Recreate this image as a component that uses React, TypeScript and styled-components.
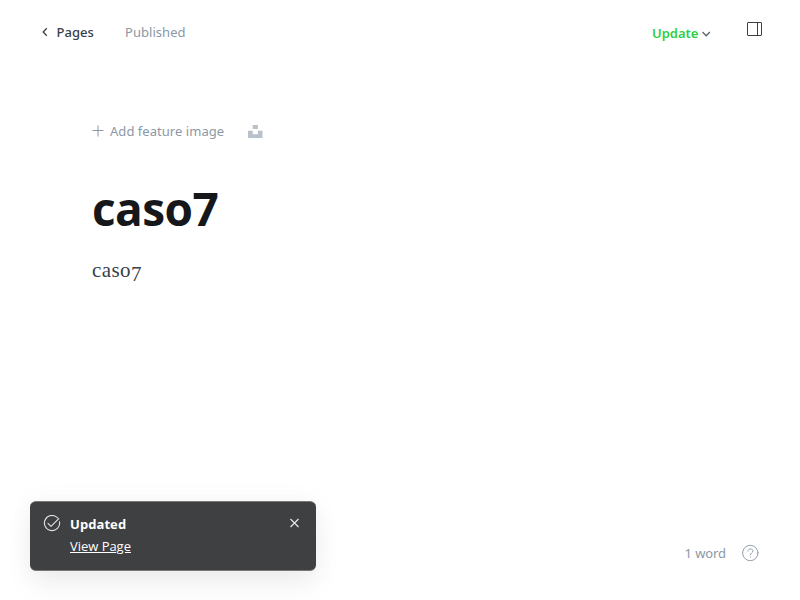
import React from "react";
import styled, { createGlobalStyle } from "styled-components";

const GlobalStyle = createGlobalStyle`
  * { box-sizing: border-box; }
  body { margin: 0; background: #fff; font-family: "Noto Sans", "Open Sans", sans-serif; }
`;

const Screen = styled.div`
  position: relative;
  width: 800px;
  height: 600px;
  overflow: hidden;
  display: flex;
  flex-direction: column;
  background: #fff;
`;

const Header = styled.header`
  height: 64px;
  padding: 0 37px 0 41px;
  display: flex;
  align-items: center;
  flex-shrink: 0;
`;

const BackLink = styled.a`
  display: flex;
  align-items: center;
  gap: 8.5px;
  width: 84px;
  color: #394047;
`;

const Label = styled.span<{ $color: string; $weight?: number; $spacing?: number }>`
  font-size: 13px;
  line-height: 20px;
  white-space: nowrap;
  color: ${(p) => p.$color};
  font-weight: ${(p) => p.$weight ?? 400};
  letter-spacing: ${(p) => p.$spacing ?? 0.04}px;
`;

const HeaderActions = styled.div`
  display: flex;
  align-items: center;
  margin-left: auto;
`;

const UpdateButton = styled.button`
  display: flex;
  align-items: center;
  gap: 3px;
  width: 94px;
  padding: 2px 0 0;
  border: 0;
  background: none;
  font-family: inherit;
  color: #30cf43;
`;

const PanelButton = styled.button`
  display: flex;
  padding: 0 0 7px;
  border: 0;
  background: none;
`;

const Editor = styled.main`
  flex: 1;
  padding: 57px 92px 0;
`;

const FeatureRow = styled.div`
  display: flex;
  align-items: center;
  height: 20px;
`;

const AddImage = styled.button`
  display: flex;
  align-items: center;
  gap: 6px;
  width: 156px;
  padding: 0;
  border: 0;
  background: none;
  font-family: inherit;
`;

const Title = styled.h1`
  margin: 37px 0 0;
  height: 60px;
  font-family: "Open Sans", "Noto Sans", sans-serif;
  font-size: 46px;
  line-height: 60px;
  font-weight: 700;
  letter-spacing: -0.6px;
  color: #15171a;
`;

const Body = styled.p`
  margin: 16px 0 0;
  font-family: "Liberation Serif", serif;
  font-size: 21px;
  line-height: 32px;
  letter-spacing: 0.4px;
  color: #394047;
`;

const OldStyleFigure = styled.span`
  display: inline-block;
  transform: translateY(4px);
`;

const Footer = styled.footer`
  height: 94px;
  padding: 37px 41px 0 0;
  display: flex;
  align-items: flex-start;
  justify-content: flex-end;
  gap: 15px;
`;

const Toast = styled.aside`
  position: absolute;
  left: 30px;
  top: 501px;
  width: 286px;
  height: 70px;
  padding: 13px 16px 0 13px;
  display: flex;
  align-items: flex-start;
  border: 1px solid #77777a;
  border-width: 1px 0;
  border-radius: 6px;
  background: #3f4042;
  box-shadow: 0 0 28px rgba(0, 0, 0, 0.04), 0 14px 28px rgba(0, 0, 0, 0.06);
`;

const ToastText = styled.div`
  flex: 1;
  display: flex;
  flex-direction: column;
  align-items: flex-start;
  gap: 1px;
  margin: -1px 0 0 9px;
  color: #fff;
`;

const ToastTitle = styled.strong`
  font-family: "Open Sans", sans-serif;
  font-size: 13px;
  line-height: 20px;
  font-weight: 700;
  letter-spacing: 0.07px;
`;

const ToastLink = styled.a`
  font-family: "Open Sans", sans-serif;
  font-size: 13px;
  line-height: 22px;
  letter-spacing: -0.03px;
  text-decoration: underline;
`;

export default function App() {
  return (
    <Screen>
      <GlobalStyle />
      <Header>
        <BackLink>
          <svg width="7" height="10" viewBox="0 0 7 10" fill="none" stroke="#394047" strokeWidth="1.3">
            <path d="M5.8 1.3 2.2 5l3.6 3.7" />
          </svg>
          <Label $color="#394047" $weight={500}>Pages</Label>
        </BackLink>
        <Label $color="#8b98a5">Published</Label>
        <HeaderActions>
          <UpdateButton>
            <Label $color="#30cf43" $weight={600} $spacing={-0.03}>Update</Label>
            <svg width="10" height="7" viewBox="0 0 10 7" fill="none" stroke="#5c656e" strokeWidth="1.4">
              <path d="M1.5 2.1 5.2 5.7l3.7-3.6" />
            </svg>
          </UpdateButton>
          <PanelButton aria-label="Settings">
            <svg width="17" height="16" viewBox="0 0 17 16" fill="none" stroke="#394047">
              <rect x="1.5" y="1.5" width="14" height="13" rx=".5" />
              <path d="M11.5 1.5v13" />
            </svg>
          </PanelButton>
        </HeaderActions>
      </Header>
      <Editor>
        <FeatureRow>
          <AddImage>
            <svg width="12" height="12" viewBox="0 0 12 12" stroke="#8b98a5">
              <path d="M6 .5v11M.5 5.5h11" />
            </svg>
            <Label $color="#8b98a5">Add feature image</Label>
          </AddImage>
          <svg width="15" height="14" viewBox="0 0 15 14" fill="#b9c2ca">
            <path d="M4.7 1h5.2v4H4.7zM0 6.7h4.7v3.5h5.2V6.7h4.6V14H0z" />
          </svg>
        </FeatureRow>
        <Title>caso7</Title>
        <Body>caso<OldStyleFigure>7</OldStyleFigure></Body>
      </Editor>
      <Footer>
        <Label $color="#8b98a5" $spacing={-0.1}>1 word</Label>
        <svg width="18" height="20" viewBox="0 0 18 20" fill="none" stroke="#929eab" strokeLinecap="round">
          <circle cx="9.3" cy="10" r="7.7" />
          <path d="M6.9 8.2c0-3.2 5-3 5-.1 0 1.8-2.5 1.8-2.5 3.7M9.4 13.9v.2" />
        </svg>
      </Footer>
      <Toast>
        <svg width="18" height="18" viewBox="0 0 18 18" fill="none" stroke="#e4e4e5" strokeWidth="1.1" strokeLinecap="round" strokeLinejoin="round">
          <path d="M14.7 3A7.6 7.6 0 1 0 16.5 6.7" />
          <path d="m5 8.3 3 3 7.8-7.6" />
        </svg>
        <ToastText>
          <ToastTitle>Updated</ToastTitle>
          <ToastLink>View Page</ToastLink>
        </ToastText>
        <svg width="11" height="16" viewBox="0 0 11 16" stroke="#e6e6e7" strokeWidth="1.2">
          <path d="m1.5 4 8 8M9.5 4l-8 8" />
        </svg>
      </Toast>
    </Screen>
  );
}
